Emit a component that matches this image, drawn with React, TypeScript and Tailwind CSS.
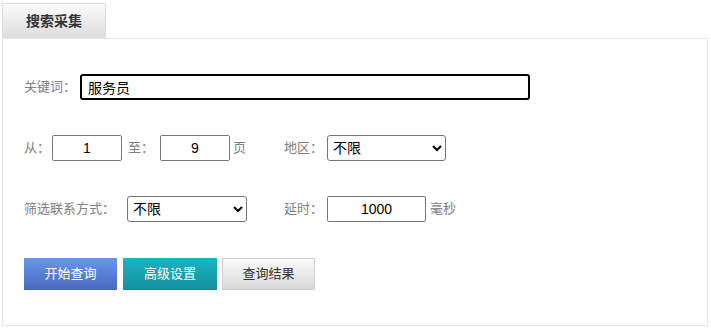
import React from 'react';

const font = { fontFamily: '"Liberation Sans", "Noto Sans CJK SC", sans-serif' };

function Label({ children, className = '' }: { children: React.ReactNode; className?: string }) {
  return <span className={`text-[13px] text-[#808080] whitespace-nowrap ${className}`}>{children}</span>;
}

function Select({ width }: { width: string }) {
  return (
    <select
      defaultValue="不限"
      className={`${width} h-[26px] border border-[#767676] rounded-[3px] bg-white text-[14px] text-black pl-[1px]`}
    >
      <option>不限</option>
      <option>手机</option>
      <option>邮箱</option>
    </select>
  );
}

export default function App() {
  return (
    <div className="pt-[3px] px-[2px] bg-white min-h-[330px]" style={font}>
      {/* tab */}
      <div className="w-[104px] h-[35px] border border-b-0 border-[#dcdcdc] bg-gradient-to-b from-[#fbfbfb] to-[#dddddd] flex items-center justify-center">
        <span className="text-[14px] font-bold text-[#333]">搜索采集</span>
      </div>

      {/* panel */}
      <div className="w-[706px] h-[288px] border border-[#e6e6e6] pl-[21px] pt-[35px] flex flex-col gap-[35px]">
        <div className="flex items-center h-[26px]">
          <Label className="w-[56px]">关键词：</Label>
          <input
            defaultValue="服务员"
            className="w-[450px] h-[26px] border-2 border-black rounded-[3px] px-[6px] text-[14px] text-black outline-none"
          />
        </div>

        <div className="flex items-center h-[26px]">
          <div className="w-[260px] flex items-center">
            <Label className="w-[28px]">从：</Label>
            <input defaultValue="1" className="w-[70px] h-[26px] border border-[#767676] rounded-[2px] text-center text-[14px] text-black" />
            <Label className="ml-[6px] w-[32px]">至：</Label>
            <input defaultValue="9" className="w-[70px] h-[26px] border border-[#767676] rounded-[2px] text-center text-[14px] text-black" />
            <Label className="ml-[3px]">页</Label>
          </div>
          <Label className="w-[43px]">地区：</Label>
          <Select width="w-[119px]" />
        </div>

        <div className="flex items-center h-[26px]">
          <div className="w-[260px] flex items-center">
            <Label className="w-[103px]">筛选联系方式：</Label>
            <Select width="w-[120px]" />
          </div>
          <Label className="w-[43px]">延时：</Label>
          <input defaultValue="1000" className="w-[99px] h-[26px] border border-[#767676] rounded-[2px] text-center text-[14px] text-black" />
          <Label className="ml-[4px]">毫秒</Label>
        </div>

        <div className="flex items-center mt-[1px]">
          <button className="w-[93px] h-[32px] bg-gradient-to-b from-[#6797f0] to-[#4a69bd] text-white text-[13px]">开始查询</button>
          <button className="ml-[6px] w-[94px] h-[32px] bg-gradient-to-b from-[#1db4c6] to-[#138f9b] text-white text-[13px]">高级设置</button>
          <button className="ml-[5px] w-[93px] h-[32px] border border-[#cfcfcf] bg-gradient-to-b from-[#fbfbfb] to-[#d8d8d8] text-[#333] text-[13px]">查询结果</button>
        </div>
      </div>
    </div>
  );
}
